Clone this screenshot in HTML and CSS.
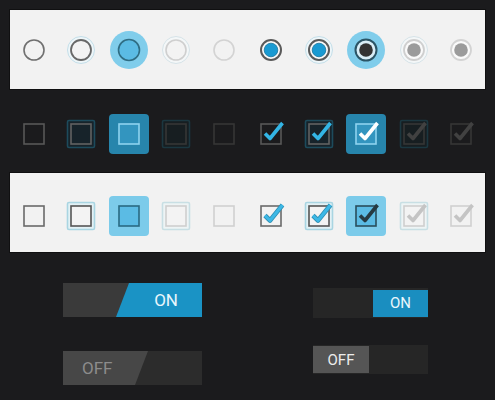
FILE: index.html
```html
<!DOCTYPE html>
<html>
<head>
<meta charset="utf-8">
<link rel="stylesheet" href="styles.css">
</head>
<body>
<div class="page">
  <div class="panel">
    <div class="row">
      <svg class="ctl" viewBox="0 0 40 40"><circle cx="20" cy="20" r="10" fill="none" stroke="#707070" stroke-width="1.6"/></svg>
      <svg class="ctl" viewBox="0 0 40 40"><circle cx="20" cy="20" r="13.5" fill="#eef6f9" stroke="#c4dfe9" stroke-width="1"/><circle cx="20" cy="20" r="10" fill="#f3f3f3" stroke="#686868" stroke-width="1.8"/></svg>
      <svg class="ctl" viewBox="0 0 40 40"><circle cx="20" cy="20" r="19" fill="#80cdeb"/><circle cx="20" cy="20" r="10.5" fill="#5bbbe4" stroke="#2f6d84" stroke-width="1.6"/></svg>
      <svg class="ctl" viewBox="0 0 40 40"><circle cx="20" cy="20" r="13.5" fill="#f4f7f8" stroke="#d6e3e8" stroke-width="1"/><circle cx="20" cy="20" r="10" fill="#f3f3f3" stroke="#cfcfcf" stroke-width="1.6"/></svg>
      <svg class="ctl" viewBox="0 0 40 40"><circle cx="20" cy="20" r="10" fill="none" stroke="#d3d3d3" stroke-width="1.6"/></svg>
      <svg class="ctl" viewBox="0 0 40 40"><circle cx="20" cy="20" r="10" fill="#fafafa" stroke="#5a5a5a" stroke-width="2"/><circle cx="20" cy="20" r="6.8" fill="#1a9ad2" stroke="#17729a" stroke-width="0.8"/></svg>
      <svg class="ctl" viewBox="0 0 40 40"><circle cx="20" cy="20" r="13.5" fill="#eef6f9" stroke="#c4dfe9" stroke-width="1"/><circle cx="20" cy="20" r="10" fill="#fafafa" stroke="#5a5a5a" stroke-width="2"/><circle cx="20" cy="20" r="6.8" fill="#1a9ad2" stroke="#17729a" stroke-width="0.8"/></svg>
      <svg class="ctl" viewBox="0 0 40 40"><circle cx="20" cy="20" r="19" fill="#80cdeb"/><circle cx="20" cy="20" r="10.5" fill="#d9eef7" stroke="#2b5566" stroke-width="2"/><circle cx="20" cy="20" r="6.8" fill="#333"/></svg>
      <svg class="ctl" viewBox="0 0 40 40"><circle cx="20" cy="20" r="13.5" fill="#f4f7f8" stroke="#d6e3e8" stroke-width="1"/><circle cx="20" cy="20" r="10" fill="#fafafa" stroke="#cfcfcf" stroke-width="1.8"/><circle cx="20" cy="20" r="6.8" fill="#9b9b9b"/></svg>
      <svg class="ctl" viewBox="0 0 40 40"><circle cx="20" cy="20" r="10" fill="#fafafa" stroke="#d3d3d3" stroke-width="1.8"/><circle cx="20" cy="20" r="6.8" fill="#9b9b9b"/></svg>
    </div>
  </div>

  <div class="dark-row">
    <div class="row">
      <svg class="ctl" viewBox="0 0 40 40"><rect x="10" y="10" width="20" height="20" fill="none" stroke="#585858" stroke-width="1.6"/></svg>
      <svg class="ctl" viewBox="0 0 40 40"><rect x="6.5" y="6.5" width="27" height="27" rx="1.5" fill="#17232a" stroke="#1d4b5c" stroke-width="1.6"/><rect x="10" y="10" width="20" height="20" fill="none" stroke="#626262" stroke-width="1.6"/></svg>
      <svg class="ctl" viewBox="0 0 40 40"><rect x="0" y="0" width="40" height="40" rx="4" fill="#2785ac"/><rect x="10" y="10" width="20" height="20" fill="#3395bf" stroke="#8ed3ef" stroke-width="1.6"/></svg>
      <svg class="ctl" viewBox="0 0 40 40"><rect x="6.5" y="6.5" width="27" height="27" rx="1.5" fill="#171e21" stroke="#1b3740" stroke-width="1.6"/><rect x="10" y="10" width="20" height="20" fill="none" stroke="#363636" stroke-width="1.6"/></svg>
      <svg class="ctl" viewBox="0 0 40 40"><rect x="10" y="10" width="20" height="20" fill="none" stroke="#363636" stroke-width="1.6"/></svg>
      <svg class="ctl" viewBox="0 0 40 40"><rect x="10" y="10" width="20" height="20" fill="none" stroke="#585858" stroke-width="1.6"/><path d="M14 19.5 L19 24.5 L31.5 9" fill="none" stroke="#33b5e5" stroke-width="3.6" stroke-linejoin="round"/></svg>
      <svg class="ctl" viewBox="0 0 40 40"><rect x="6.5" y="6.5" width="27" height="27" rx="1.5" fill="#17232a" stroke="#1d4b5c" stroke-width="1.6"/><rect x="10" y="10" width="20" height="20" fill="none" stroke="#626262" stroke-width="1.6"/><path d="M14 19.5 L19 24.5 L31.5 9" fill="none" stroke="#33b5e5" stroke-width="3.6" stroke-linejoin="round"/></svg>
      <svg class="ctl" viewBox="0 0 40 40"><rect x="0" y="0" width="40" height="40" rx="4" fill="#2785ac"/><rect x="10" y="10" width="20" height="20" fill="#3395bf" stroke="#8ed3ef" stroke-width="1.6"/><path d="M14 19.5 L19 24.5 L31.5 9" fill="none" stroke="#ffffff" stroke-width="3.6" stroke-linejoin="round"/></svg>
      <svg class="ctl" viewBox="0 0 40 40"><rect x="6.5" y="6.5" width="27" height="27" rx="1.5" fill="#171e21" stroke="#1b3740" stroke-width="1.6"/><rect x="10" y="10" width="20" height="20" fill="none" stroke="#363636" stroke-width="1.6"/><path d="M14 19.5 L19 24.5 L31.5 9" fill="none" stroke="#414141" stroke-width="3.6" stroke-linejoin="round"/></svg>
      <svg class="ctl" viewBox="0 0 40 40"><rect x="10" y="10" width="20" height="20" fill="none" stroke="#363636" stroke-width="1.6"/><path d="M14 19.5 L19 24.5 L31.5 9" fill="none" stroke="#414141" stroke-width="3.6" stroke-linejoin="round"/></svg>
    </div>
  </div>

  <div class="panel panel-low">
    <div class="row">
      <svg class="ctl" viewBox="0 0 40 40"><rect x="10" y="10" width="20" height="20" fill="none" stroke="#6a6a6a" stroke-width="1.6"/></svg>
      <svg class="ctl" viewBox="0 0 40 40"><rect x="6.5" y="6.5" width="27" height="27" rx="1.5" fill="#e3f1f5" stroke="#a9d5e2" stroke-width="1.6"/><rect x="10" y="10" width="20" height="20" fill="#f3f3f3" stroke="#555" stroke-width="1.6"/></svg>
      <svg class="ctl" viewBox="0 0 40 40"><rect x="0" y="0" width="40" height="40" rx="4" fill="#7ccbea"/><rect x="10" y="10" width="20" height="20" fill="#5bbbe4" stroke="#2a6a82" stroke-width="1.6"/></svg>
      <svg class="ctl" viewBox="0 0 40 40"><rect x="6.5" y="6.5" width="27" height="27" rx="1.5" fill="#eef4f5" stroke="#c8dfe4" stroke-width="1.6"/><rect x="10" y="10" width="20" height="20" fill="#f3f3f3" stroke="#cfcfcf" stroke-width="1.6"/></svg>
      <svg class="ctl" viewBox="0 0 40 40"><rect x="10" y="10" width="20" height="20" fill="none" stroke="#d0d0d0" stroke-width="1.6"/></svg>
      <svg class="ctl" viewBox="0 0 40 40"><rect x="10" y="10" width="20" height="20" fill="none" stroke="#6a6a6a" stroke-width="1.6"/><path d="M14 19.5 L19 24.5 L31.5 9" fill="none" stroke="#2f8fb3" stroke-width="4.6" stroke-linejoin="round"/><path d="M14 19.5 L19 24.5 L31.5 9" fill="none" stroke="#3cb8e6" stroke-width="3" stroke-linejoin="round"/></svg>
      <svg class="ctl" viewBox="0 0 40 40"><rect x="6.5" y="6.5" width="27" height="27" rx="1.5" fill="#e3f1f5" stroke="#a9d5e2" stroke-width="1.6"/><rect x="10" y="10" width="20" height="20" fill="#f3f3f3" stroke="#555" stroke-width="1.6"/><path d="M14 19.5 L19 24.5 L31.5 9" fill="none" stroke="#2f8fb3" stroke-width="4.6" stroke-linejoin="round"/><path d="M14 19.5 L19 24.5 L31.5 9" fill="none" stroke="#3cb8e6" stroke-width="3" stroke-linejoin="round"/></svg>
      <svg class="ctl" viewBox="0 0 40 40"><rect x="0" y="0" width="40" height="40" rx="4" fill="#7ccbea"/><rect x="10" y="10" width="20" height="20" fill="#5bbbe4" stroke="#2a4e5c" stroke-width="1.6"/><path d="M14 19.5 L19 24.5 L31.5 9" fill="none" stroke="#263a42" stroke-width="3.6" stroke-linejoin="round"/></svg>
      <svg class="ctl" viewBox="0 0 40 40"><rect x="6.5" y="6.5" width="27" height="27" rx="1.5" fill="#eef4f5" stroke="#c8dfe4" stroke-width="1.6"/><rect x="10" y="10" width="20" height="20" fill="#f3f3f3" stroke="#cfcfcf" stroke-width="1.6"/><path d="M14 19.5 L19 24.5 L31.5 9" fill="none" stroke="#c4c4c4" stroke-width="3.6" stroke-linejoin="round"/></svg>
      <svg class="ctl" viewBox="0 0 40 40"><rect x="10" y="10" width="20" height="20" fill="none" stroke="#d0d0d0" stroke-width="1.6"/><path d="M14 19.5 L19 24.5 L31.5 9" fill="none" stroke="#c4c4c4" stroke-width="3.6" stroke-linejoin="round"/></svg>
    </div>
  </div>

  <div class="switches">
    <div class="col col-big">
      <div class="sw big on"><span class="thumb"></span><span class="label">ON</span></div>
      <div class="sw big off"><span class="thumb"></span><span class="label">OFF</span></div>
    </div>
    <div class="col col-small">
      <div class="sw small on"><span class="label">ON</span></div>
      <div class="sw small off"><span class="label">OFF</span></div>
    </div>
  </div>
</div>
</body>
</html>
```
FILE: styles.css
```css
* { box-sizing: border-box; }
html, body {
  margin: 0;
  padding: 0;
  background: #1b1b1d;
  font-family: Roboto, "Liberation Sans", sans-serif;
}
.page {
  width: 495px;
  height: 400px;
  overflow: hidden;
  background: #1b1b1d;
  padding-top: 10px;
}
.panel {
  margin: 0 10px;
  height: 79px;
  background: #f2f2f2;
  box-shadow: 0 0 0 1px #101011;
}
.panel-low {
  padding-top: 7px;
}
.dark-row {
  margin: 0 10px;
  height: 84px;
  padding-top: 5px;
}
.row {
  height: 100%;
  display: grid;
  grid-template-columns: repeat(10, 1fr);
  align-items: center;
  justify-items: center;
}
.ctl {
  width: 40px;
  height: 40px;
  display: block;
}
.switches {
  display: flex;
}
.col {
  display: flex;
  flex-direction: column;
}
.col-big {
  margin-left: 63px;
  margin-top: 31px;
  gap: 34px;
}
.col-small {
  margin-left: 111px;
  margin-top: 36px;
  gap: 27px;
}
.sw {
  position: relative;
  display: flex;
  align-items: center;
  color: #fff;
  overflow: hidden;
}
.sw .label { position: relative; }
.big {
  width: 139px;
  height: 34px;
  font-size: 17px;
}
.big.on {
  background: #3a3a3a;
  justify-content: flex-end;
  padding-right: 24px;
}
.big.on .thumb {
  position: absolute;
  top: 0; bottom: 0; right: 0;
  width: 86px;
  background: #1a93c5;
  clip-path: polygon(13px 0, 100% 0, 100% 100%, 0 100%);
}
.big.on .label { color: #e8f6fc; }
.big.off {
  background: #2c2c2c;
  padding-left: 19px;
}
.big.off .thumb {
  position: absolute;
  top: 0; bottom: 0; left: 0;
  width: 85px;
  background: #474747;
  clip-path: polygon(0 0, 100% 0, calc(100% - 13px) 100%, 0 100%);
}
.big.off .label { color: #8c8c8c; }
.small {
  width: 115px;
  font-size: 15px;
  background: #262626;
}
.small.on {
  height: 30px;
  justify-content: flex-end;
}
.small.on .label {
  width: 55px;
  height: 27px;
  background: #1a8ec0;
  display: flex;
  align-items: center;
  justify-content: center;
  color: #eaf7fd;
}
.small.off {
  height: 29px;
  justify-content: flex-start;
}
.small.off .label {
  width: 56px;
  height: 27px;
  background: #555555;
  display: flex;
  align-items: center;
  justify-content: center;
  color: #ececec;
}
```
